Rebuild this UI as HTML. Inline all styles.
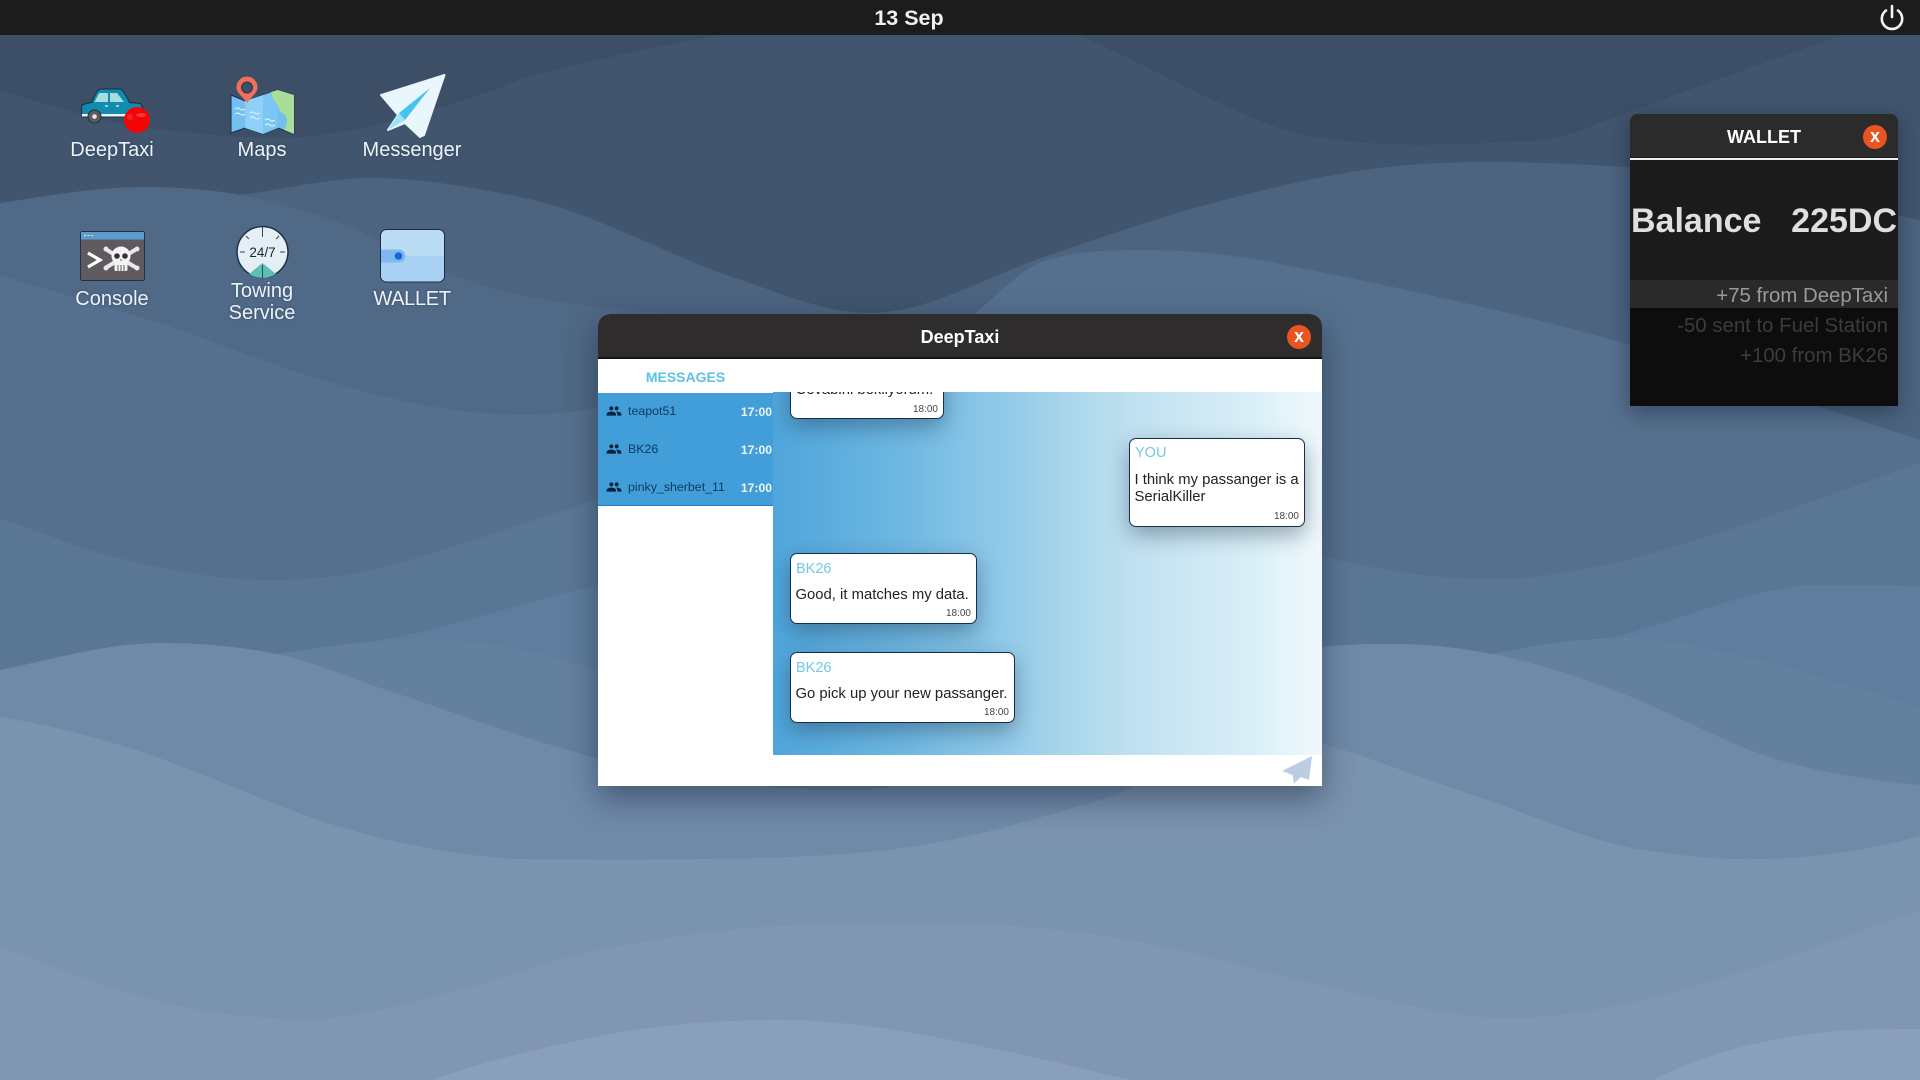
<!DOCTYPE html>
<html><head><meta charset="utf-8"><title>Desktop</title>
<style>
html,body{margin:0;padding:0;width:1920px;height:1080px;overflow:hidden;background:#3c4f67;font-family:"Liberation Sans",sans-serif}
.t{position:absolute;white-space:nowrap}
.lab{position:absolute;width:140px;text-align:center;color:#eef3f8;font-size:20px;line-height:22px;text-shadow:0 0 2px rgba(30,50,80,.5)}
.bar{position:absolute;left:0;top:0;width:1920px;height:35px;background:#1c1c1c}
.close{position:absolute;width:24px;height:24px;border-radius:50%;background:#e95420;color:#fff;font-weight:bold;font-size:18px;line-height:22px;text-align:center}
.win{position:absolute;left:598px;top:314px;width:724px;height:472px;background:#fff;border-radius:12px 12px 0 0;box-shadow:0 12px 32px rgba(15,25,45,.45);overflow:hidden}
.winh{position:absolute;left:0;top:0;width:724px;height:43px;background:#2e2c2c;border-bottom:2px solid #141414}
.side{position:absolute;left:0;top:79px;width:175px;height:112px;background:#429ed8;border-bottom:1px solid #1f7fc0}
.row{position:absolute;left:0;width:175px;height:38px}
.row svg{position:absolute;left:8px;top:10px}
.row .n{position:absolute;left:30px;top:0;line-height:36px;font-size:12.4px;color:#0c3a63;white-space:nowrap}
.row .h{position:absolute;right:1px;top:0;line-height:38px;font-size:12.2px;font-weight:bold;color:#eaf5fc}
.chat{position:absolute;left:175px;top:78px;width:549px;height:363px;background:linear-gradient(90deg,#4fa6db 0%,#6db7e2 23%,#8fc9e9 41%,#a6d5eb 52%,#bfe0f0 65%,#d9eff8 87%,#eff9fc 100%);overflow:hidden}
.b{position:absolute;background:#fff;border:1px solid #13304f;border-radius:7px;box-shadow:0 8px 22px rgba(20,40,60,.38);box-sizing:border-box}
.b .w{position:absolute;left:5px;top:7px;font-size:14.5px;line-height:16px;color:#74c8e2}
.b .m{position:absolute;left:4.5px;font-size:14.85px;line-height:17px;color:#222;white-space:nowrap}
.b .c{position:absolute;right:5px;bottom:3px;font-size:10px;line-height:12px;color:#444}
.wal{position:absolute;left:1630px;top:114px;width:268px;height:292px;background:#1b1b1b;border-radius:8px 8px 0 0;box-shadow:0 6px 22px rgba(15,25,45,.45);overflow:hidden}
</style></head><body>
<svg style="position:absolute;left:0;top:0" width="1920" height="1080" viewBox="0 0 1920 1080">
<rect width="1920" height="1080" fill="#3c4f67"/>
<path fill="#41556e" d="M0 90C22 96 80 117 130 125C180 133 250 140 300 137C350 134 396 120 433 110C460 102 495 90 520 80C560 66 680 42 750 30H1065C1120 50 1212 105 1286 131C1367 150 1449 145 1530 141C1564 141 1599 122 1633 110C1701 86 1769 61 1837 37C1865 27 1892 20 1920 15V1080H0Z"/>
<path fill="#4c6480" d="M240 195C283 190 327 178 370 178C420 178 470 187 520 197C592 211 663 254 735 278C780 293 825 313 870 313C927 313 984 278 1041 258C1102 237 1163 216 1224 200C1285 184 1347 170 1408 165C1469 160 1531 162 1592 165C1701 170 1811 198 1920 220V1080H240Z"/>
<path fill="#4f6986" d="M0 203C48 196 95 187 143 187C175 187 208 189 240 195C271 201 302 209 333 220C366 232 400 254 433 267C462 279 491 289 520 295C592 309 663 314 735 318C783 320 832 345 880 345V1080H0Z"/>
<path fill="#55708e" d="M0 275C50 290 100 305 150 320C202 336 254 359 306 375C370 394 433 411 497 414C530 416 564 415 597 407C665 390 732 378 800 360C850 347 900 352 950 330C980 316 1011 275 1041 262C1077 250 1114 250 1150 250C1195 250 1241 256 1286 265C1400 288 1514 312 1628 344C1725 376 1823 408 1920 440V1080H0Z"/>
<path fill="#5a7695" d="M0 519C38 530 77 548 115 557C166 570 217 580 268 580C306 580 345 577 383 567C454 549 526 521 597 500C665 480 732 440 800 430C867 430 933 430 1000 445C1107 460 1213 529 1320 556C1377 570 1435 579 1492 579C1537 579 1581 571 1626 560C1724 535 1822 497 1920 463V1080H0Z"/>
<path fill="#5f7d9e" d="M276 654C318 648 360 645 402 636C467 623 532 599 597 586C700 566 800 590 900 600C1000 610 1100 700 1200 720C1283 730 1367 740 1450 720C1504 710 1557 652 1611 638C1673 622 1736 594 1798 586C1839 584 1880 586 1920 586V1080H276Z"/>
<path fill="#64809f" d="M276 654C324 647 373 639 421 639C480 639 538 652 597 670C700 700 800 770 900 770C1000 770 1130 770 1250 770C1330 760 1411 670 1492 654C1537 645 1581 638 1626 638C1664 638 1703 648 1741 656C1801 668 1860 690 1920 708V1080H276Z"/>
<path fill="#6f8aa9" d="M0 670C54 659 107 643 161 643C199 643 238 646 276 654C312 661 347 677 383 689C454 712 526 740 597 758C681 779 766 790 850 790C933 790 1017 739 1100 710C1173 684 1247 654 1320 647C1346 644 1371 644 1397 644C1429 644 1460 648 1492 654C1537 663 1581 677 1626 695C1677 715 1728 745 1779 760C1826 774 1873 780 1920 785V1080H0Z"/>
<path fill="#7a93ae" d="M0 717C51 725 102 738 153 756C217 778 280 809 344 828C402 845 459 856 517 859C598 860 679 860 760 858C823 856 887 853 950 840C1000 830 1050 815 1100 800C1150 785 1200 745 1250 736C1273 736 1297 737 1320 743C1371 758 1422 778 1473 795C1524 812 1575 835 1626 847C1671 855 1715 860 1760 859C1813 858 1867 851 1920 836V1080H0Z"/>
<path fill="#8096b3" d="M0 947C51 965 102 987 153 1000C204 1013 255 1019 306 1019C357 1019 408 1003 459 990C506 978 553 959 600 950C667 937 733 927 800 925C867 923 933 925 1000 925C1067 929 1133 938 1200 955C1240 965 1280 976 1320 985C1384 999 1447 1018 1511 1018C1562 1018 1613 1007 1664 994C1749 973 1835 940 1920 910V1080H0Z"/>
<path fill="#8a9fbb" d="M432 1080C488 1060 544 1047 600 1036C660 1024 720 1020 780 1020C853 1020 927 1035 1000 1050C1067 1063 1133 1085 1200 1090H1653V1080C1708 1052 1762 1040 1817 1033C1851 1029 1885 1029 1920 1029V1090H432Z"/>
</svg>

<div class="bar"></div>
<div class="t" style="left:849px;width:120px;text-align:center;top:6px;font-size:21.5px;line-height:25px;font-weight:bold;color:#f2f2f2">13 Sep</div>
<svg style="position:absolute;left:1878px;top:3px" width="28" height="28" viewBox="0 0 28 28" fill="none" stroke="#f5f5f5" stroke-width="2.6" stroke-linecap="round"><path d="M8 7.5A10.2 10.2 0 1 0 20 7.5"/><path d="M14 3V14"/></svg>

<!-- DeepTaxi icon -->
<svg style="position:absolute;left:75px;top:80px" width="80" height="60" viewBox="75 80 80 60">
<path d="M82 117L81.500 106C83 104 88 103 92 102.500C94 96 97 89.500 101 89H120C123 90 127 97 129.500 102.500L140 103.500C143 105 143 112 143 117Z" fill="#118bb0" stroke="#14303f" stroke-width="1"/>
<path d="M94.500 102L98.500 94H102V102Z" fill="#a6dede"/><path d="M99 93H108V102H99Z" fill="#a6dede"/><path d="M110 93H117L124 102H110Z" fill="#a6dede"/>
<path d="M105 106H108M116 106H119" stroke="#e5f5f8" stroke-width="1.200"/>
<rect x="82" y="114" width="50" height="2.500" fill="#eef4f6"/>
<circle cx="94.500" cy="116.500" r="6.500" fill="#5b5b5b" stroke="#22303a" stroke-width="1"/><circle cx="94.500" cy="116.500" r="2.300" fill="#e8e8e8"/>
<circle cx="137" cy="120" r="13" fill="#f30505"/><ellipse cx="141" cy="115" rx="5" ry="2" fill="#f23a3a"/><circle cx="130" cy="117" r="3" fill="#f32424"/>
</svg>
<div class="lab" style="left:42px;top:139px">DeepTaxi</div>

<!-- Maps icon -->
<svg style="position:absolute;left:225px;top:72px" width="76" height="66" viewBox="225 72 76 66">
<path d="M231 95L245 101L263 95L278 90L294 95V134L278 128L263 134L245 128L231 133Z" fill="#72bff0" stroke="#15314a" stroke-width="1"/>
<path d="M245 101L263 95V134L245 128Z" fill="#8fd0f8"/><path d="M263 95L278 90V128L263 134Z" fill="#7cc6f3"/>
<path d="M271 92L278 90L294 95V134L284 130C288 124 288 118 284 114C277 112 280 104 274 101Z" fill="#a8de9a"/>
<path d="M235 109q3-2 5 0t5 0M235 114q3-2 5 0t5 0M250 113q3-2 5 0t5 0M250 118q3-2 5 0t5 0M265 120q3-2 5 0t5 0M265 125q3-2 5 0t5 0" fill="none" stroke="#d6effc" stroke-width="1.200"/>
<path d="M247 103C241 95 236 92 236.500 87A10.500 10.500 0 0 1 257.500 87C258 92 253 95 247 103Z" fill="#ef6f5c"/>
<circle cx="247" cy="87.500" r="5.500" fill="#3d5068" stroke="#27384c" stroke-width="1"/>
</svg>
<div class="lab" style="left:192px;top:139px">Maps</div>

<!-- Messenger icon -->
<svg style="position:absolute;left:375px;top:70px" width="76" height="72" viewBox="375 70 76 72">
<path d="M444.500 75L381 95L398 115L388 130L405 123L420 137L424 135Z" fill="#e9f6fb" stroke="#e9f6fb" stroke-width="2" stroke-linejoin="round"/>
<path d="M430 88L399 113L405 120Z" fill="#45c4ef"/>
<path d="M399 113L388 130L405 120Z" fill="#9ee2f5"/>
</svg>
<div class="lab" style="left:342px;top:139px">Messenger</div>

<!-- Console icon -->
<svg style="position:absolute;left:78px;top:229px" width="70" height="54" viewBox="78 229 70 54">
<rect x="80.500" y="231.500" width="64" height="49" rx="2" fill="#5f5a60" stroke="#1f3048" stroke-width="1"/>
<rect x="81" y="232" width="63" height="7.500" fill="#5b9ccb"/>
<path d="M84 235.500H86M87.500 235.500H89.500M91 235.500H93" stroke="#dceaf4" stroke-width="1"/>
<path d="M88 253L100 260L88 267" fill="none" stroke="#fff" stroke-width="3.200"/>
<path d="M107 250L135 267M107 267L135 250" stroke="#e9e9e9" stroke-width="4" stroke-linecap="round"/>
<circle cx="106" cy="249" r="2.500" fill="#e9e9e9"/><circle cx="106" cy="268" r="2.500" fill="#e9e9e9"/><circle cx="137" cy="249" r="2.500" fill="#e9e9e9"/><circle cx="137" cy="268" r="2.500" fill="#e9e9e9"/>
<circle cx="121" cy="256" r="9.500" fill="#f3f3f3"/><rect x="114.500" y="261" width="13" height="10" rx="1.500" fill="#f3f3f3"/>
<circle cx="117" cy="256" r="2.800" fill="#35303a"/><circle cx="125" cy="256" r="2.800" fill="#35303a"/>
<path d="M121 259v2M118 265v6M121 265v6M124 265v6" stroke="#5f5a60" stroke-width="1"/>
</svg>
<div class="lab" style="left:42px;top:288px">Console</div>

<!-- Towing icon -->
<svg style="position:absolute;left:234px;top:224px" width="56" height="56" viewBox="234 224 56 56">
<circle cx="262.500" cy="252" r="25.500" fill="#e5eef5" stroke="#1e3145" stroke-width="1.500"/>
<path d="M249 274L262.500 263L276 274A25 25 0 0 1 249 274Z" fill="#5ebfb8"/>
<path d="M262.500 227V237M262.500 265V278M240 252H245M280 252H285M246 236L249 239M279 236L276 239" stroke="#33475a" stroke-width="1"/>
<text x="262.500" y="257" text-anchor="middle" font-family="Liberation Sans" font-size="13.500" fill="#1c2530">24/7</text>
</svg>
<div class="lab" style="left:192px;top:280px">Towing<br>Service</div>

<!-- Wallet icon -->
<svg style="position:absolute;left:378px;top:227px" width="70" height="58" viewBox="378 227 70 58">
<rect x="380.500" y="229.500" width="64" height="52.500" rx="6" fill="#bbdcf5" stroke="#1a2c44" stroke-width="1"/>
<path d="M381 256H444V276a5 5 0 0 1-5 5H386a5 5 0 0 1-5-5Z" fill="#a9d1f3"/>
<path d="M381 249.500H399a6.500 6.500 0 0 1 0 13H381Z" fill="#7fb9ee"/>
<circle cx="398.500" cy="256" r="3.800" fill="#1a66d8"/>
</svg>
<div class="lab" style="left:342px;top:288px;letter-spacing:-.35px">WALLET</div>

<!-- DeepTaxi window -->
<div class="win">
<div class="winh"></div>
<div class="t" style="left:0;width:724px;text-align:center;top:12px;font-size:18px;line-height:22px;font-weight:bold;color:#fff">DeepTaxi</div>
<div class="close" style="left:689px;top:11px">x</div>
<div class="t" style="left:0;width:175px;text-align:center;top:55px;font-size:14px;line-height:17px;font-weight:bold;color:#5cc2e2">MESSAGES</div>
<div class="side">
<div class="row" style="top:0"><svg width="16" height="16" viewBox="0 0 24 24" fill="#0a2038"><path d="M16 11c1.660 0 2.990-1.340 2.990-3S17.660 5 16 5c-1.660 0-3 1.340-3 3s1.340 3 3 3zm-8 0c1.660 0 2.990-1.340 2.990-3S9.660 5 8 5C6.340 5 5 6.340 5 8s1.340 3 3 3zm0 2c-2.330 0-7 1.170-7 3.500V19h14v-2.500c0-2.330-4.670-3.500-7-3.500zm8 0c-.29 0-.62.02-.97.05 1.160.84 1.970 1.970 1.970 3.450V19h6v-2.500c0-2.330-4.670-3.500-7-3.500z"/></svg><span class="n">teapot51</span><span class="h">17:00</span></div>
<div class="row" style="top:38px"><svg width="16" height="16" viewBox="0 0 24 24" fill="#0a2038"><path d="M16 11c1.660 0 2.990-1.340 2.990-3S17.660 5 16 5c-1.660 0-3 1.340-3 3s1.340 3 3 3zm-8 0c1.660 0 2.990-1.340 2.990-3S9.660 5 8 5C6.340 5 5 6.340 5 8s1.340 3 3 3zm0 2c-2.330 0-7 1.170-7 3.500V19h14v-2.500c0-2.330-4.670-3.500-7-3.500zm8 0c-.29 0-.62.02-.97.05 1.160.84 1.970 1.970 1.970 3.450V19h6v-2.500c0-2.330-4.670-3.500-7-3.500z"/></svg><span class="n">BK26</span><span class="h">17:00</span></div>
<div class="row" style="top:76px"><svg width="16" height="16" viewBox="0 0 24 24" fill="#0a2038"><path d="M16 11c1.660 0 2.990-1.340 2.990-3S17.660 5 16 5c-1.660 0-3 1.340-3 3s1.340 3 3 3zm-8 0c1.660 0 2.990-1.340 2.990-3S9.660 5 8 5C6.340 5 5 6.340 5 8s1.340 3 3 3zm0 2c-2.330 0-7 1.170-7 3.500V19h14v-2.500c0-2.330-4.670-3.500-7-3.500zm8 0c-.29 0-.62.02-.97.05 1.160.84 1.970 1.970 1.970 3.450V19h6v-2.500c0-2.330-4.670-3.500-7-3.500z"/></svg><span class="n">pinky_sherbet_11</span><span class="h">17:00</span></div>
</div>
<div class="chat">
<div class="b" style="left:17px;top:-40px;width:154px;height:67px"><div class="m" style="top:29px">Cevabini bekliyorum.</div><div class="c" style="bottom:2px">18:00</div></div>
<div class="b" style="left:356px;top:46px;width:176px;height:89px"><div class="w" style="top:6px">YOU</div><div class="m" style="top:33px">I think my passanger is a<br>SerialKiller</div><div class="c">18:00</div></div>
<div class="b" style="left:17px;top:161px;width:187px;height:71px"><div class="w">BK26</div><div class="m" style="top:33px">Good, it matches my data.</div><div class="c">18:00</div></div>
<div class="b" style="left:17px;top:260px;width:225px;height:71px"><div class="w">BK26</div><div class="m" style="top:33px">Go pick up your new passanger.</div><div class="c">18:00</div></div>
</div>
<svg style="position:absolute;left:682px;top:441px" width="36" height="30" viewBox="0 0 36 30"><path d="M32 1L2 16L12.500 20L14 28.500L21 22L29 25Z" fill="#bccde3"/></svg>
</div>

<!-- Wallet -->
<div class="wal">
<div style="position:absolute;left:0;top:0;width:268px;height:43px;background:#2c2b2b"></div>
<div style="position:absolute;left:0;top:44px;width:268px;height:2px;background:#eee"></div>
<div class="t" style="left:0;width:268px;text-align:center;top:12px;font-size:18px;line-height:22px;font-weight:bold;color:#fff">WALLET</div>
<div class="close" style="left:233px;top:11px">x</div>
<div class="t" style="left:1px;top:87px;font-size:34px;line-height:40px;font-weight:bold;color:#dfdfdf">Balance</div>
<div class="t" style="right:1px;top:87px;font-size:34px;line-height:40px;font-weight:bold;color:#dfdfdf">225DC</div>
<div style="position:absolute;left:0;top:166px;width:268px;height:28px;background:#2a2a2a"></div>
<div style="position:absolute;left:0;top:194px;width:268px;height:98px;background:#0d0d0d"></div>
<div class="t" style="right:10px;top:167px;font-size:20.4px;line-height:30px;color:#9a9a9a">+75 from DeepTaxi</div>
<div class="t" style="right:10px;top:197px;font-size:20.4px;line-height:30px;color:#3c3c3c">-50 sent to Fuel Station</div>
<div class="t" style="right:10px;top:227px;font-size:20.4px;line-height:30px;color:#3c3c3c">+100 from BK26</div>
</div>
</body></html>
